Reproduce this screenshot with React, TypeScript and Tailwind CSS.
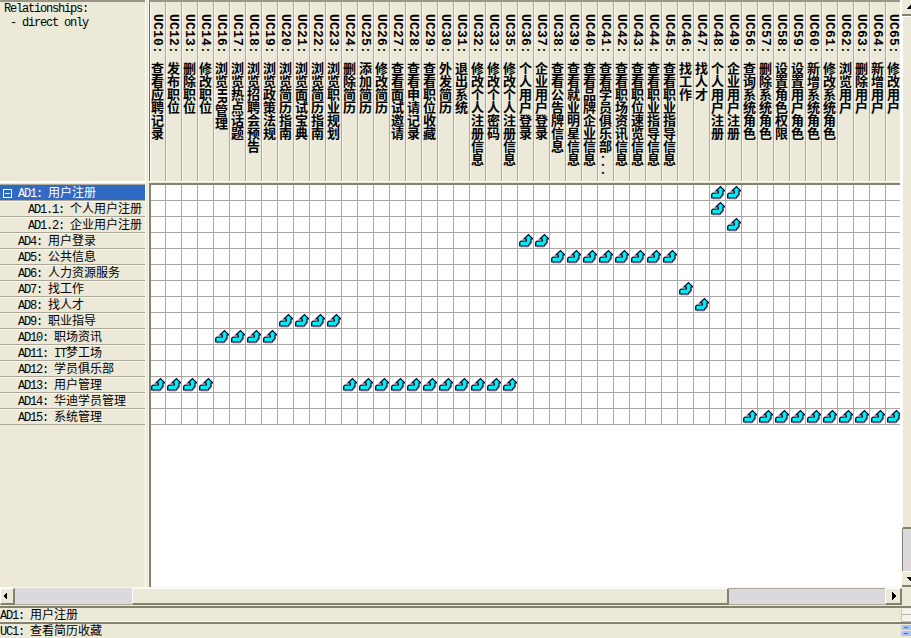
import React from "react";

const useCases: [string, string][] = [
  ["UC10", "查看应聘记录"], ["UC12", "发布职位"], ["UC13", "删除职位"], ["UC14", "修改职位"],
  ["UC16", "浏览HR管理"], ["UC17", "浏览热点话题"], ["UC18", "浏览招聘会预告"], ["UC19", "浏览政策法规"],
  ["UC20", "浏览简历指南"], ["UC21", "浏览面试宝典"], ["UC22", "浏览简历指南"], ["UC23", "浏览职业规划"],
  ["UC24", "删除简历"], ["UC25", "添加简历"], ["UC26", "修改简历"], ["UC27", "查看面试邀请"],
  ["UC28", "查看申请记录"], ["UC29", "查看职位收藏"], ["UC30", "外发简历"], ["UC31", "退出系统"],
  ["UC32", "修改个人注册信息"], ["UC33", "修改个人密码"], ["UC35", "修改个人注册信息"], ["UC36", "个人用户登录"],
  ["UC37", "企业用户登录"], ["UC38", "查看公告牌信息"], ["UC39", "查看就业明星信息"], ["UC40", "查看品牌企业信息"],
  ["UC41", "查看学员俱乐部..."], ["UC42", "查看职场资讯信息"], ["UC43", "查看职位速览信息"], ["UC44", "查看职业指导信息"],
  ["UC45", "查看职业指导信息"], ["UC46", "找工作"], ["UC47", "找人才"], ["UC48", "个人用户注册"],
  ["UC49", "企业用户注册"], ["UC56", "查询系统角色"], ["UC57", "删除系统角色"], ["UC58", "设置角色权限"],
  ["UC59", "设置用户角色"], ["UC60", "新增系统角色"], ["UC61", "修改系统角色"], ["UC62", "浏览用户"],
  ["UC63", "删除用户"], ["UC64", "新增用户"], ["UC65", "修改用户"],
];

type Row = { label: string; links: [number, number][]; child?: boolean; selected?: boolean };

// links holds inclusive column ranges
const rows: Row[] = [
  { label: "AD1: 用户注册", links: [[35, 36]], selected: true },
  { label: "AD1.1: 个人用户注册", links: [[35, 35]], child: true },
  { label: "AD1.2: 企业用户注册", links: [[36, 36]], child: true },
  { label: "AD4: 用户登录", links: [[23, 24]] },
  { label: "AD5: 公共信息", links: [[25, 32]] },
  { label: "AD6: 人力资源服务", links: [] },
  { label: "AD7: 找工作", links: [[33, 33]] },
  { label: "AD8: 找人才", links: [[34, 34]] },
  { label: "AD9: 职业指导", links: [[8, 11]] },
  { label: "AD10: 职场资讯", links: [[4, 7]] },
  { label: "AD11: IT梦工场", links: [] },
  { label: "AD12: 学员俱乐部", links: [] },
  { label: "AD13: 用户管理", links: [[0, 3], [12, 22]] },
  { label: "AD14: 华迪学员管理", links: [] },
  { label: "AD15: 系统管理", links: [[37, 46]] },
];

const split = (s: string) => s.match(/[\x00-\x7f]+|[^\x00-\x7f]+/g) ?? [];
const isLatin = (s: string) => s.charCodeAt(0) < 128;

function Label({ text }: { text: string }) {
  return (
    <span className="whitespace-pre">
      {split(text).map((part, i) => (
        <span
          key={i}
          className={
            isLatin(part)
              ? "font-['Liberation_Mono',monospace] text-[12px] tracking-[-1.2px]"
              : "font-['Noto_Sans_CJK_SC',sans-serif] text-[12px]"
          }
        >
          {part}
        </span>
      ))}
    </span>
  );
}

function VerticalLabel({ text }: { text: string }) {
  return (
    <span className="-ml-px block w-[15px] whitespace-pre font-bold leading-[15px] [writing-mode:vertical-rl]">
      {split(text).map((part, i) => (
        <span
          key={i}
          className={
            isLatin(part)
              ? "font-['Liberation_Mono',monospace] text-[13px] tracking-[0.2px]"
              : "font-['Noto_Sans_CJK_SC',sans-serif] text-[13px]"
          }
        >
          {part}
        </span>
      ))}
    </span>
  );
}

function LinkArrow() {
  return (
    <svg width="15" height="15" viewBox="-0.5 -0.5 15 15" className="block">
      <path d="M2.2 13.4h7.6l3-3V7" fill="none" stroke="#8a8a9a" strokeWidth=".8" />
      <path
        d="M1.2 8.7 2.7 7.5h5.1V5.5H5.4L10 1l4.5 4.5H12.5v3L9.5 12.5H1.2z"
        fill="#00f0f0"
        stroke="#00002c"
        strokeWidth="1.2"
      />
    </svg>
  );
}

function Arrow({ dir }: { dir: "left" | "right" | "up" | "down" }) {
  const d = { left: "M5 0v8L1 4z", right: "M2 0v8l4-4z", up: "M0 6h8L4 2z", down: "M0 2h8L4 6z" }[dir];
  return (
    <svg width="8" height="8" viewBox="0 0 8 8" className="shrink-0" shapeRendering="crispEdges">
      <path d={d} />
    </svg>
  );
}

const raised = "border-t border-l border-t-white border-l-white border-b-2 border-r-2 border-b-[#85816f] border-r-[#85816f]";

export default function App() {
  return (
    <div className="flex h-[638px] w-[911px] flex-col overflow-hidden bg-[#ece9d8] text-black">
      <div className="flex h-[587px] shrink-0">
        {/* Row headers */}
        <div className="flex w-[146px] shrink-0 flex-col border-r border-white">
          <div className="h-[181px] shrink-0 border-t-2 border-[#99968a] pl-[4px] text-[12px] leading-[14px]">
            <div className="-mt-px h-[14px]"><Label text="Relationships:" /></div>
            <div className="h-[14px]"><Label text=" - direct only" /></div>
          </div>
          <div className="h-[4px] shrink-0 border-b border-t-2 border-b-[#aca899] border-t-white" />
          {rows.map((r) => (
            <div
              key={r.label}
              className={`flex h-[16px] shrink-0 items-start border-b border-[#aca899] ${
                r.selected ? "bg-[#316ac5] leading-[12px] text-white" : "border-t border-t-[#f8f7f0] leading-[10px]"
              }`}
            >
              <span className={`flex shrink-0 items-center pl-[3px] ${r.child ? "w-[28px]" : "w-[18px]"}`}>
                {r.selected && (
                  <span className="mt-[4px] flex size-[9px] items-center justify-center border border-white">
                    <span className="h-px w-[5px] bg-white" />
                  </span>
                )}
              </span>
              <Label text={r.label} />
            </div>
          ))}
        </div>
        <div className="w-[3px] shrink-0 border-r border-[#f8f7f0]" />

        {/* Relationship matrix */}
        <div className="flex w-[751px] shrink-0 flex-col overflow-hidden">
          <div className="flex h-[181px] shrink-0 overflow-hidden border-l border-t-2 border-l-[#716f64] border-t-[#99968a]">
            {useCases.map(([id, name]) => (
              <div key={id} className="w-[16px] shrink-0 border-l border-r border-l-[#f8f7f0] border-r-[#aca899] pt-[12px]">
                <VerticalLabel text={`${id}: ${name}`} />
              </div>
            ))}
          </div>
          <div className="h-[4px] shrink-0 border-b-2 border-t border-b-[#85816f] border-t-white" />
          <div className="grow overflow-hidden border-l-2 border-[#85816f] bg-white">
            {rows.map((r) => (
              <div key={r.label} className="-ml-px flex h-[16px]">
                {useCases.map(([id], c) => (
                  <div key={id} className="h-[16px] w-[16px] shrink-0 border-b border-r border-[#a8a8a8]">
                    {r.links.some(([a, b]) => c >= a && c <= b) && <LinkArrow />}
                  </div>
                ))}
              </div>
            ))}
          </div>
        </div>

        {/* Vertical scroll bar */}
        <div className="flex w-[11px] shrink-0 flex-col overflow-hidden border-l-2 border-white">
          <div className="flex h-[16px] w-[16px] shrink-0 items-center justify-center border-b-2 border-[#85816f]">
            <Arrow dir="up" />
          </div>
          <div className="h-[513px] shrink-0 border-b-2 border-l border-t border-b-[#85816f] border-l-white border-t-white" />
          <div className="h-[42px] shrink-0 border-l border-[#85816f] bg-[#dcd9dd]" />
          <div className="flex h-[16px] w-[16px] shrink-0 items-center justify-center border-b-2 border-t border-b-[#85816f] border-t-white">
            <Arrow dir="down" />
          </div>
        </div>
      </div>

      {/* Horizontal scroll bar */}
      <div className="flex h-[18px] w-[902px] shrink-0 border-t border-[#f8f7f0]">
        <div className={`flex w-[15px] shrink-0 items-center pl-px ${raised}`}><Arrow dir="left" /></div>
        <div className="w-[117px] shrink-0 border-b border-[#aca899] bg-[#dcd9dd]" />
        <div className={`w-[597px] shrink-0 ${raised}`} />
        <div className="w-[156px] shrink-0 border-b border-t border-[#aca899] bg-[#dcd9dd]" />
        <div className={`flex w-[17px] shrink-0 items-center pl-[4px] ${raised}`}><Arrow dir="right" /></div>
      </div>

      {/* Status lines */}
      <div className="mt-px flex h-[16px] shrink-0 border-t-2 border-[#85816f]">
        <div className="w-[901px] border-b border-[#f8f7f0] leading-[10px]"><Label text="AD1: 用户注册" /></div>
        <div className="mt-px grow border-b border-l border-[#c9c6b8] bg-[#f4f3ec]">
          <div className="mt-[5px] border-t border-[#b8b5a8]" />
        </div>
      </div>
      <div className="flex h-[16px] shrink-0 border-t-2 border-[#85816f]">
        <div className="w-[901px] leading-[10px]"><Label text="UC1: 查看简历收藏" /></div>
        <div className="flex grow flex-col gap-px pt-px">
          <div className="flex h-[5px] items-center justify-center rounded-l-sm bg-[#a9c0f3]"><span className="h-px w-[4px] bg-[#4d6fc0]" /></div>
          <div className="flex h-[5px] items-center justify-center rounded-l-sm bg-[#a9c0f3]"><span className="h-px w-[4px] bg-[#4d6fc0]" /></div>
        </div>
      </div>
    </div>
  );
}
